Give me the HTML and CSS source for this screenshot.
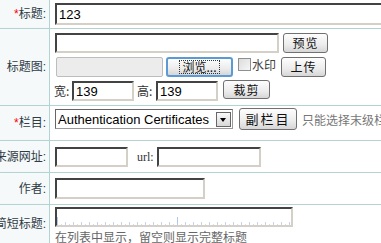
FILE: index.html
```html
<!DOCTYPE html>
<html lang="zh-CN">
<head>
    <meta charset="UTF-8">
    <title>编辑内容</title>
    <link rel="stylesheet" href="styles.css">
</head>
<body>
    <table class="form">
        <tr>
            <th><span class="req">*</span>标题:</th>
            <td class="cell-title"><input type="text" class="txt title-input" value="123"></td>
        </tr>
        <tr>
            <th>标题图:</th>
            <td class="cell-pic">
                <div class="line">
                    <input type="text" class="txt pic-input">
                    <button class="btn btn-preview">预览</button>
                </div>
                <div class="line">
                    <span class="file-box"></span>
                    <button class="btn btn-browse"><span>浏览...</span></button>
                    <input type="checkbox" class="chk" id="mark">
                    <label for="mark" class="chk-label">水印</label>
                    <button class="btn btn-upload">上传</button>
                </div>
                <div class="line">
                    <span class="dim">宽:</span>
                    <input type="text" class="txt size-input" value="139">
                    <span class="dim dim-h">高:</span>
                    <input type="text" class="txt size-input" value="139">
                    <button class="btn btn-crop">裁剪</button>
                </div>
            </td>
        </tr>
        <tr>
            <th><span class="req">*</span>栏目:</th>
            <td class="cell-cat">
                <div class="line line-cat">
                    <div class="select">
                        <span class="select-text">Authentication Certificates</span>
                        <span class="select-arrow"></span>
                    </div>
                    <button class="btn btn-sub">副栏目</button>
                    <span class="hint">只能选择末级栏目</span>
                </div>
            </td>
        </tr>
        <tr>
            <th>来源网址:</th>
            <td class="cell-src">
                <div class="line">
                    <input type="text" class="txt src-input">
                    <span class="url-label">url:</span>
                    <input type="text" class="txt url-input">
                </div>
            </td>
        </tr>
        <tr>
            <th>作者:</th>
            <td class="cell-author"><input type="text" class="txt author-input"></td>
        </tr>
        <tr>
            <th>简短标题:</th>
            <td class="cell-short">
                <input type="text" class="txt short-input">
                <div class="note">在列表中显示，留空则显示完整标题</div>
            </td>
        </tr>
    </table>
</body>
</html>
```

FILE: styles.css
```css
body {
    margin: 0;
    overflow: hidden;
    font-family: "Liberation Sans", "Noto Sans CJK SC", sans-serif;
    font-size: 12px;
    color: #333;
    background: #fff;
}
.form {
    margin-left: -40px;
    width: 480px;
    table-layout: fixed;
    border-collapse: separate;
    border-spacing: 0;
}
.form th {
    width: 86px;
    padding: 0 3px 0 0;
    text-align: right;
    vertical-align: middle;
    font-weight: normal;
    font-size: 12px;
    line-height: 16px;
    white-space: nowrap;
    color: #2f3b45;
    background: #f6f9fa;
    border-right: 1px solid #b3d2d2;
    border-bottom: 1px solid #b3d2d2;
}
.form td {
    padding: 0 5px;
    vertical-align: top;
    border-bottom: 1px solid #b3d2d2;
}
.req {
    color: #f00;
}
.cell-title {
    padding-top: 3px !important;
    padding-bottom: 3px !important;
}
.cell-pic {
    padding-top: 4px !important;
}
.cell-cat {
    padding-top: 2px !important;
    padding-bottom: 10px !important;
}
.cell-src {
    padding-top: 6px !important;
    padding-bottom: 5px !important;
}
.cell-author {
    padding-top: 5px !important;
    padding-bottom: 5px !important;
}
.cell-short {
    padding-top: 2px !important;
    border-bottom: none !important;
}
.line {
    display: flex;
    align-items: flex-start;
    height: 24px;
    white-space: nowrap;
}
.line-cat {
    align-items: center;
    height: 22px;
}
.cell-src .line {
    height: 20px;
}

/* text boxes */
.txt {
    display: block;
    box-sizing: border-box;
    height: 20px;
    margin: 0;
    padding: 0 2px;
    border: 2px solid;
    border-color: #434343 #d4d0c8 #d4d0c8 #434343;
    font-family: "Liberation Sans", sans-serif;
    font-size: 13px;
    color: #000;
    background: #fff;
    outline: none;
}
.title-input {
    width: 400px;
    height: 22px;
}
.pic-input {
    width: 224px;
}
.size-input {
    width: 62px;
}
.src-input {
    width: 73px;
}
.url-input {
    width: 104px;
}
.author-input {
    width: 150px;
    height: 21px;
}
.short-input {
    width: 238px;
    background-color: #fff;
    background-image:
        repeating-linear-gradient(to right, #b4c8ef 0 1px, transparent 1px 120px),
        repeating-linear-gradient(to right, #c6d4f2 0 1px, transparent 1px 8px),
        repeating-linear-gradient(to right, transparent 0 4px, #d6e0f5 4px 5px, transparent 5px 8px);
    background-size: 100% 8px, 100% 3px, 100% 1px;
    background-position: left bottom;
    background-repeat: no-repeat;
}

/* buttons */
.btn {
    box-sizing: border-box;
    height: 20px;
    margin: 0;
    padding: 0;
    border: 1px solid #707070;
    border-radius: 3px;
    background: linear-gradient(#fdfdfd, #ececec 60%, #d6d6d6);
    font-family: "Noto Sans CJK SC", sans-serif;
    font-size: 12px;
    line-height: 16px;
    letter-spacing: 1px;
    color: #111;
    cursor: pointer;
}
.btn-preview {
    width: 45px;
    margin-left: 4px;
}
.btn-browse {
    width: 67px;
    margin-left: 3px;
    border: 2px solid #5b9bd5;
    letter-spacing: 0;
}
.btn-browse span {
    display: inline-block;
    padding: 0 2px;
    line-height: 12px;
    outline: 1px dotted #333;
}
.btn-upload {
    width: 45px;
    margin-left: 5px;
}
.btn-crop {
    width: 47px;
    height: 19px;
    margin: -1px 0 0 5px;
}
.btn-sub {
    width: 58px;
    height: 22px;
    margin-left: 6px;
    font-size: 13px;
    letter-spacing: 2px;
}

.file-box {
    box-sizing: border-box;
    width: 107px;
    height: 20px;
    margin-left: 1px;
    border: 1px solid #bdbdbd;
    border-radius: 2px;
    background: #ececec;
}
.chk {
    appearance: none;
    box-sizing: border-box;
    width: 13px;
    height: 13px;
    margin: 1px 0 0 5px;
    border: 1px solid #8e8f8f;
    background: linear-gradient(135deg, #dcdcdc, #f6f6f6);
}
.chk-label {
    margin-left: 1px;
    line-height: 16px;
    font-family: "Noto Sans CJK SC", sans-serif;
    color: #444;
}
.dim {
    width: 18px;
    line-height: 20px;
    margin-left: -1px;
    font-family: "Noto Sans CJK SC", sans-serif;
}
.dim-h {
    width: 19px;
    margin-left: 3px;
}

/* dropdown */
.select {
    display: flex;
    align-items: center;
    box-sizing: border-box;
    width: 178px;
    height: 20px;
    border: 1px solid;
    border-color: #666 #999 #999 #666;
    background: #fff;
}
.select-text {
    flex: 1;
    padding-left: 2px;
    overflow: hidden;
    font-size: 13px;
    color: #000;
}
.select-arrow {
    position: relative;
    box-sizing: border-box;
    width: 15px;
    height: 15px;
    margin-right: 1px;
    border: 1px solid #666;
    background: linear-gradient(#fafafa, #d8d8d8);
}
.select-arrow::after {
    content: "";
    position: absolute;
    left: 3px;
    top: 5px;
    border-left: 3px solid transparent;
    border-right: 3px solid transparent;
    border-top: 4px solid #000;
}
.hint {
    margin-left: 5px;
    font-family: "Noto Sans CJK SC", sans-serif;
    color: #777;
}
.url-label {
    width: 20px;
    margin-left: 9px;
    line-height: 20px;
    font-family: "Liberation Serif", serif;
    font-size: 12px;
    color: #333;
}
.note {
    margin-top: 2px;
    line-height: 15px;
    font-family: "Noto Sans CJK SC", sans-serif;
    color: #666;
}
```
